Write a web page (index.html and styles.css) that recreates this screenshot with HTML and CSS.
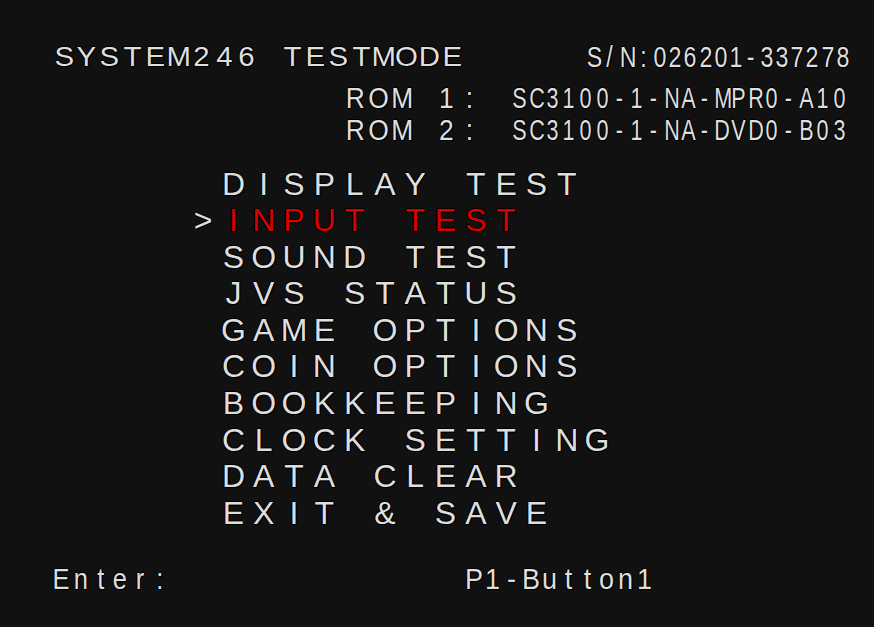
FILE: index.html
```html
<!DOCTYPE html>
<html lang="en">
<head>
    <meta charset="UTF-8">
    <meta name="viewport" content="width=device-width, initial-scale=1.0">
    <title>SYSTEM246 TESTMODE</title>
    <link rel="stylesheet" href="styles.css">
</head>
<body>
    <main class="screen">
        <header class="top-row">
            <span class="title cells">SYSTEM246 TESTMODE</span>
            <span class="serial">
                <span class="sn-label cells">S/N:</span><span class="sn-number cells">026201-337278</span>
            </span>
        </header>

        <div class="rom-table">
            <div class="rom-row">
                <span class="rom-label cells">ROM 1:</span>
                <span class="rom-value cells">SC3100-1-NA-MPR0-A10</span>
            </div>
            <div class="rom-row">
                <span class="rom-label cells">ROM 2:</span>
                <span class="rom-value cells">SC3100-1-NA-DVD0-B03</span>
            </div>
        </div>

        <ul class="menu">
            <li class="menu-item"><span class="cursor"></span><span class="cells">DISPLAY TEST</span></li>
            <li class="menu-item selected"><span class="cursor">&gt;</span><span class="cells">INPUT TEST</span></li>
            <li class="menu-item"><span class="cursor"></span><span class="cells">SOUND TEST</span></li>
            <li class="menu-item"><span class="cursor"></span><span class="cells">JVS STATUS</span></li>
            <li class="menu-item"><span class="cursor"></span><span class="cells">GAME OPTIONS</span></li>
            <li class="menu-item"><span class="cursor"></span><span class="cells">COIN OPTIONS</span></li>
            <li class="menu-item"><span class="cursor"></span><span class="cells">BOOKKEEPING</span></li>
            <li class="menu-item"><span class="cursor"></span><span class="cells">CLOCK SETTING</span></li>
            <li class="menu-item"><span class="cursor"></span><span class="cells">DATA CLEAR</span></li>
            <li class="menu-item"><span class="cursor"></span><span class="cells">EXIT &amp; SAVE</span></li>
        </ul>

        <footer class="help-row">
            <span class="help-key cells">Enter:</span>
            <span class="help-value cells">P1-Button1</span>
        </footer>
    </main>

    <script src="script.js"></script>
</body>
</html>
```

FILE: styles.css
```css
* {
    box-sizing: border-box;
}
body {
    margin: 0;
    background-color: #111111;
    color: #dedede;
    font-family: "Liberation Sans", Arial, sans-serif;
    overflow: hidden;
}
.screen {
    width: 874px;
    height: 627px;
    padding-top: 42px;
    text-shadow: 1px 0 #000, -1px 0 #000, 0 1px #000, 0 -1px #000, 1px 1px #000;
}

/* each character sits in a fixed cell, like the original char grid */
.cells {
    display: inline-block;
    white-space: nowrap;
}
.cell {
    display: inline-block;
    width: var(--cell);
    text-align: center;
    transform: scaleX(var(--squeeze, 1));
}

.top-row {
    display: flex;
    padding: 0 24px 0 52.6px;
    line-height: 30px;
}
.title {
    font-size: 28px;
    --cell: 22.85px;
    --squeeze: 1.05;
}
.serial {
    display: flex;
    margin-left: auto;
    font-size: 29px;
    --squeeze: 0.8;
}
.sn-label {
    --cell: 16.8px;
}
.sn-number {
    --cell: 15.25px;
}

.rom-table {
    margin-top: 10px;
    padding-left: 344px;
    font-size: 30px;
    line-height: 31.5px;
}
.rom-row {
    display: flex;
}
.rom-label {
    --cell: 22.75px;
    --squeeze: 0.88;
}
.rom-value {
    --cell: 16.9px;
    --squeeze: 0.72;
    margin-left: 29.3px;
}

.menu {
    list-style: none;
    margin: 20.5px 0 0;
    padding: 0 0 0 188px;
    font-size: 32px;
    line-height: 36.6px;
    --cell: 30.3px;
}
.menu-item {
    display: flex;
}
.cursor {
    width: 30.3px;
    text-align: center;
}
.selected .cells {
    color: #d80000;
}

.help-row {
    display: flex;
    margin-top: 31.6px;
    padding-left: 51px;
    font-size: 30px;
    line-height: 32px;
    --cell: 19.8px;
}
.help-key {
    --squeeze: 0.85;
}
.help-value {
    --cell: 19px;
    --squeeze: 0.9;
    margin-left: 294.6px;
}
```

FILE: script.js
```js
// split text into one span per character so it lines up on a grid
document.querySelectorAll('.cells').forEach(el => {
    const text = el.textContent;
    el.textContent = '';
    for (const ch of text) {
        const cell = document.createElement('span');
        cell.className = 'cell';
        cell.textContent = ch;
        el.appendChild(cell);
    }
});
```
